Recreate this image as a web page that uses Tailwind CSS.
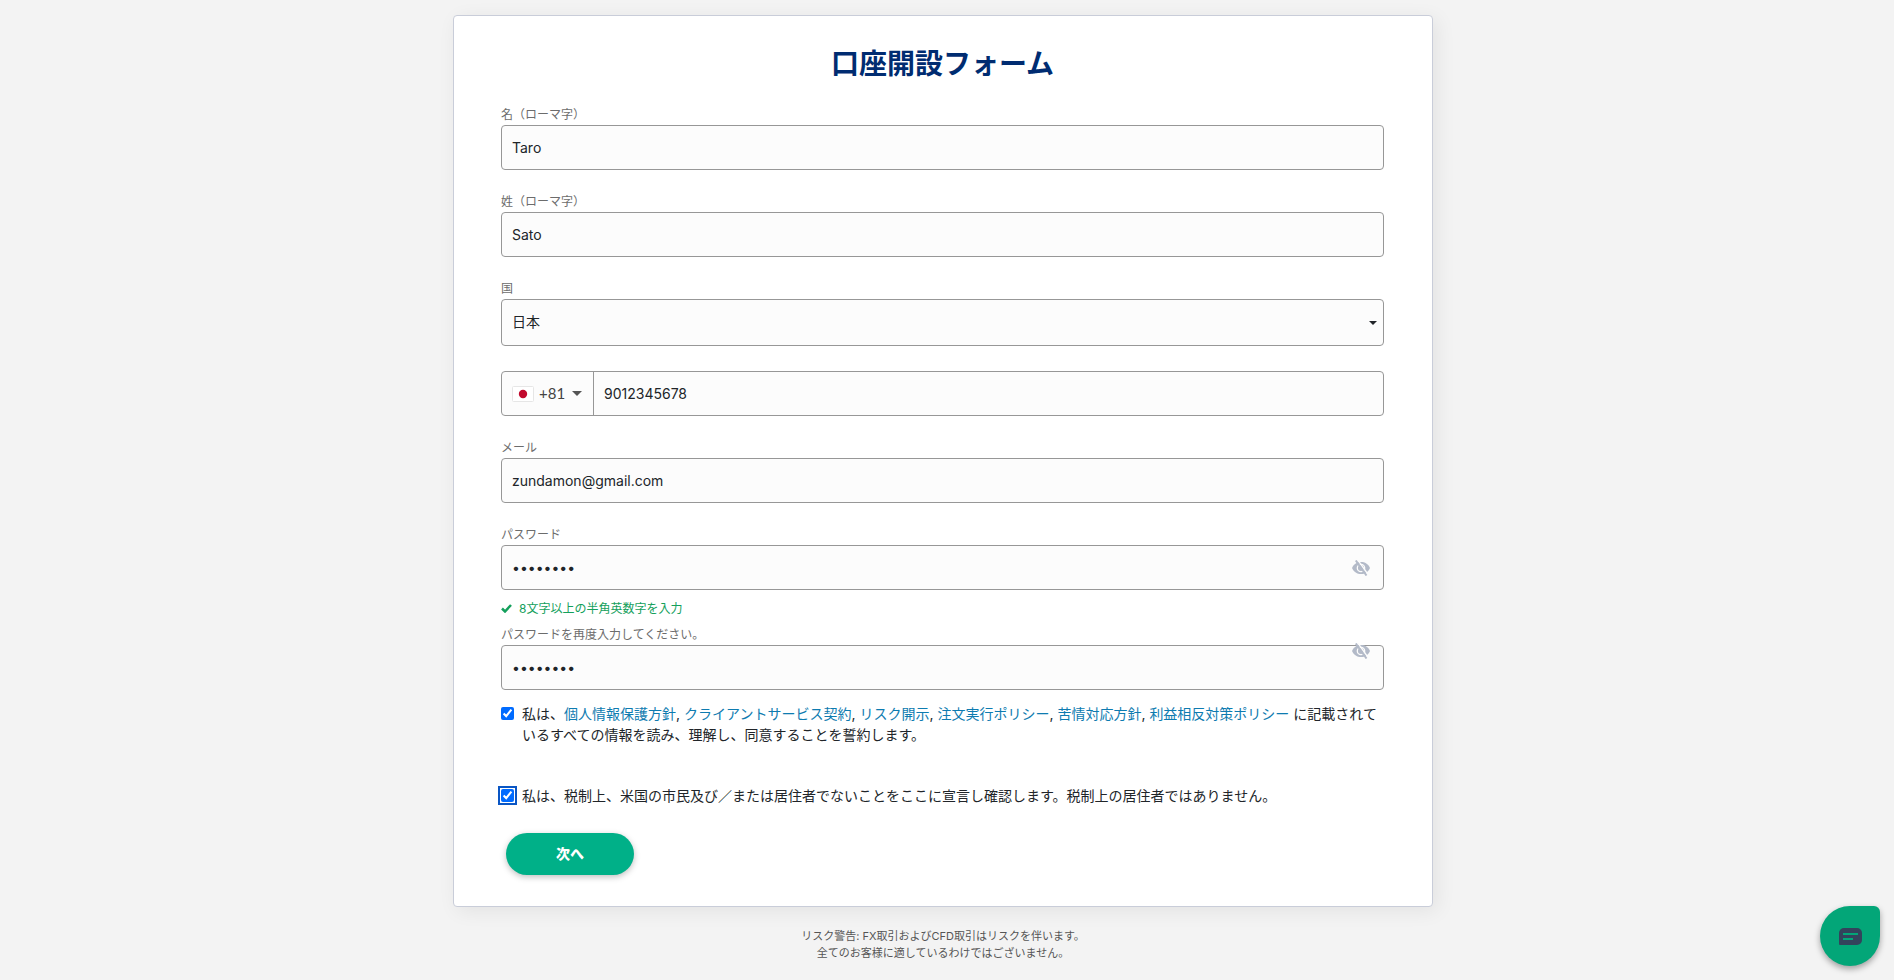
<!DOCTYPE html>
<html lang="ja">

<head>
  <meta charset="UTF-8">
  <meta name="viewport" content="width=device-width, initial-scale=1.0">
  <title>口座開設フォーム</title>
  <script src="https://cdn.jsdelivr.net/npm/@tailwindcss/browser@4"></script>
</head>

<body class="min-h-screen bg-[#f3f3f3] pt-[15px] pr-2 font-['Inter','Noto_Sans_CJK_JP',sans-serif] text-sm text-[#212529]">

  <main class="mx-auto w-full max-w-[980px] rounded border border-[#c9cdd9] bg-white pt-[26px] pr-12 pb-[31px] pl-[47px] shadow-[4px_4px_20px_rgba(0,0,0,0.07)]">
    <h1 class="mb-[19px] text-center text-[28px] leading-[44px] font-bold text-[#002c71]">口座開設フォーム</h1>

    <form>
      <!-- name -->
      <div class="mb-[22px]">
        <label for="firstName" class="block text-xs leading-5 text-[#6c6c6c]">名（ローマ字）</label>
        <input id="firstName" type="text" value="Taro"
          class="block h-[45px] w-full rounded border border-[#979797] bg-[#fcfcfc] px-[10px]">
      </div>
      <div class="mb-[22px]">
        <label for="lastName" class="block text-xs leading-5 text-[#6c6c6c]">姓（ローマ字）</label>
        <input id="lastName" type="text" value="Sato"
          class="block h-[45px] w-full rounded border border-[#979797] bg-[#fcfcfc] px-[10px]">
      </div>

      <!-- country -->
      <div class="mb-[25px]">
        <label for="country" class="block text-xs leading-5 text-[#6c6c6c]">国</label>
        <div class="relative">
          <select id="country"
            class="block h-[47px] w-full appearance-none rounded border border-[#979797] bg-[#fcfcfc] px-[10px] pb-[2px]">
            <option selected>日本</option>
          </select>
          <svg class="pointer-events-none absolute top-[22px] right-[7px] h-1 w-2" viewBox="0 0 8 4">
            <path d="M0 0h8L4 4z" fill="#212529" />
          </svg>
        </div>
      </div>

      <!-- phone -->
      <div class="mb-[22px] flex h-[45px] rounded border border-[#979797] bg-[#fcfcfc]">
        <button type="button" aria-label="国番号"
          class="flex w-[92px] shrink-0 items-center border-r border-[#979797] pl-[10px] font-['Lato','Noto_Sans_CJK_JP',sans-serif] text-[15px] text-[#444]">
          <svg class="h-4 w-[22px]" viewBox="0 0 22 16">
            <rect x=".5" y=".5" width="21" height="15" rx="1" fill="#fff" stroke="#e6e6e6" />
            <circle cx="11" cy="8" r="4.2" fill="#c1092d" />
          </svg>
          <span class="ml-[5px]">+81</span>
          <svg class="ml-[7px] h-[5px] w-[10px]" viewBox="0 0 10 5">
            <path d="M0 0h10L5 5z" fill="#555" />
          </svg>
        </button>
        <input type="tel" value="9012345678" aria-label="電話番号" class="w-full min-w-0 bg-transparent px-[10px]">
      </div>

      <!-- mail -->
      <div class="mb-[22px]">
        <label for="email" class="block text-xs leading-5 text-[#6c6c6c]">メール</label>
        <input id="email" type="email" value="zundamon@gmail.com"
          class="block h-[45px] w-full rounded border border-[#979797] bg-[#fcfcfc] px-[10px]">
      </div>

      <!-- password -->
      <div>
        <label for="password" class="block text-xs leading-5 text-[#6c6c6c]">パスワード</label>
        <div class="relative">
          <input id="password" type="password" value="abcd1234"
            class="block h-[45px] w-full rounded border border-[#979797] bg-[#fcfcfc] px-[10px]">
          <button type="button" aria-label="パスワードを表示" class="absolute top-[15px] right-[14px]">
            <svg class="h-4 w-[18px]" viewBox="0 0 18 16">
              <path d="M0 8C2 3.800 5 2 9 2s7 1.800 9 6c-2 4.200-5 6-9 6S2 12.200 0 8z" fill="#b3bac8" />
              <circle cx="9" cy="8" r="3.700" fill="none" stroke="#fcfcfc" stroke-width="1.300" />
              <path d="M5.800 0 16.500 15" stroke="#fcfcfc" stroke-width="1.300" />
              <path d="M3.800.5 14.500 15.500" stroke="#b3bac8" stroke-width="2" />
            </svg>
          </button>
        </div>
      </div>
      <p class="mt-2 mb-[5px] flex items-center gap-[7px] text-xs leading-[22px] text-[#14a05c]">
        <svg class="mb-[2px] h-[9px] w-[11px]" viewBox="0 0 11 9">
          <path d="M1 4.500 4 7.500 10 1" fill="none" stroke="#14a05c" stroke-width="2.500" />
        </svg>
        8文字以上の半角英数字を入力
      </p>
      <div>
        <label for="passwordConfirm" class="block text-xs leading-5 text-[#6c6c6c]">パスワードを再度入力してください。</label>
        <div class="relative">
          <input id="passwordConfirm" type="password" value="abcd1234"
            class="block h-[45px] w-full rounded border border-[#979797] bg-[#fcfcfc] px-[10px]">
          <button type="button" aria-label="パスワードを表示" class="absolute -top-[2px] right-[14px]">
            <svg class="h-4 w-[18px]" viewBox="0 0 18 16">
              <path d="M0 8C2 3.800 5 2 9 2s7 1.800 9 6c-2 4.200-5 6-9 6S2 12.200 0 8z" fill="#b3bac8" />
              <circle cx="9" cy="8" r="3.700" fill="none" stroke="#fcfcfc" stroke-width="1.300" />
              <path d="M5.800 0 16.500 15" stroke="#fcfcfc" stroke-width="1.300" />
              <path d="M3.800.5 14.500 15.500" stroke="#b3bac8" stroke-width="2" />
            </svg>
          </button>
        </div>
      </div>

      <!-- agreements -->
      <div class="mt-[13px] flex items-start gap-2">
        <input id="terms" type="checkbox" checked class="mt-1 size-[13px] shrink-0 accent-[#006bff]">
        <label for="terms" class="leading-[21px]">私は、<a href="#" class="text-[#0e7bb0]">個人情報保護方針</a>, <a href="#" class="text-[#0e7bb0]">クライアントサービス契約</a>, <a href="#" class="text-[#0e7bb0]">リスク開示</a>, <a href="#" class="text-[#0e7bb0]">注文実行ポリシー</a>, <a href="#" class="text-[#0e7bb0]">苦情対応方針</a>, <a href="#" class="text-[#0e7bb0]">利益相反対策ポリシー</a> に記載されているすべての情報を読み、理解し、同意することを誓約します。</label>
      </div>
      <div class="mt-10 flex items-start gap-2">
        <input id="nonUs" type="checkbox" checked
          class="mt-1 size-[13px] shrink-0 rounded-[3px] accent-[#006bff] outline-2 outline-offset-1 outline-[#0a56c4]">
        <label for="nonUs" class="leading-[21px]">私は、税制上、米国の市民及び／または居住者でないことをここに宣言し確認します。税制上の居住者ではありません。</label>
      </div>

      <button type="submit"
        class="mt-[27px] ml-[5px] block h-[42px] w-32 rounded-full bg-[#00b088] font-black text-white shadow-[0_2px_6px_rgba(0,0,0,0.25)]">次へ</button>
    </form>
  </main>

  <footer class="mt-[21px] text-center text-[11px] leading-[17px] text-[#555]">
    <p>リスク警告: FX取引およびCFD取引はリスクを伴います。</p>
    <p>全てのお客様に適しているわけではございません。</p>
  </footer>

  <!-- chat launcher -->
  <button type="button" aria-label="チャット"
    class="fixed right-[14px] bottom-[14px] flex size-[60px] items-center justify-center rounded-[30px] rounded-tr-[6px] bg-[#03a678] shadow-[0_3px_6px_rgba(0,0,0,0.35)]">
    <svg class="h-[17px] w-[23px]" viewBox="0 0 23 17">
      <path d="M5 0h13a5 5 0 0 1 5 5v7a5 5 0 0 1-5 5H1a1 1 0 0 1-1-1V5a5 5 0 0 1 5-5z" fill="#33435c" />
      <path d="M4 6h15M4 11h10" stroke="#03a678" stroke-width="2" />
    </svg>
  </button>

</body>

</html>
